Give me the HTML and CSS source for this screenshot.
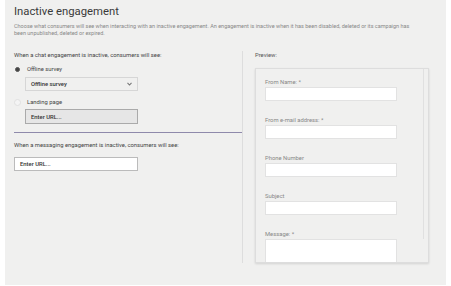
FILE: index.html
```html
<!DOCTYPE html>
<html lang="en">
<head>
    <meta charset="UTF-8">
    <title>Inactive engagement</title>
    <link rel="stylesheet" href="styles.css">
</head>
<body>
    <div class="panel">
        <h1>Inactive engagement</h1>
        <p class="desc">Choose what consumers will see when interacting with an inactive engagement. An engagement is inactive when it has been disabled, deleted or its campaign has been unpublished, deleted or expired.</p>

        <div class="columns">
            <!-- settings -->
            <div class="settings">
                <div class="block">
                    <div class="heading">When a chat engagement is inactive, consumers will see:</div>
                    <div class="radio-row"><span class="radio checked"></span>Offline survey</div>
                    <div class="select">
                        <span>Offline survey</span>
                        <svg width="5" height="4" viewBox="0 0 5 4"><path d="M0.5 0.8 L2.5 3 L4.5 0.8" fill="none" stroke="#777" stroke-width="1.1"/></svg>
                    </div>
                    <div class="radio-row"><span class="radio"></span>Landing page</div>
                    <div class="url disabled">Enter URL...</div>
                </div>
                <div class="block">
                    <div class="heading">When a messaging engagement is inactive, consumers will see:</div>
                    <div class="url wide">Enter URL...</div>
                </div>
            </div>

            <!-- preview -->
            <div class="preview">
                <div class="heading">Preview:</div>
                <div class="preview-box">
                    <div class="form">
                        <div class="field"><label>From Name: *</label><div class="input"></div></div>
                        <div class="field"><label>From e-mail address: *</label><div class="input"></div></div>
                        <div class="field"><label>Phone Number</label><div class="input"></div></div>
                        <div class="field"><label>Subject</label><div class="input"></div></div>
                        <div class="field"><label>Message: *</label><div class="input textarea"></div></div>
                    </div>
                    <div class="scrollbar"></div>
                </div>
            </div>
        </div>
    </div>
</body>
</html>
```

FILE: styles.css
```css
body {
    margin: 0;
    background-color: #fff;
    font-family: Roboto, "Liberation Sans", sans-serif;
    color: #333;
}
.panel {
    margin: 0 5px;
    height: 285px;
    background-color: #f0f0ef;
    padding: 5px 9px 0;
    box-sizing: border-box;
}
h1 {
    margin: 0;
    font-size: 11.3px;
    font-weight: 400;
    line-height: 14px;
    color: #3a3a3a;
}
.desc {
    margin: 4px 0 0;
    font-size: 5.5px;
    line-height: 7px;
    color: #888;
    width: 400px;
}
.columns {
    display: flex;
    margin-top: 14px;
}
.settings {
    width: 228px;
    height: 212px;
    border-right: 1px solid #ddd;
}
.heading {
    font-size: 5.85px;
    line-height: 8px;
    color: #444;
}
.block {
    padding-bottom: 8px;
}
.block + .block {
    border-top: 1px solid #8f8aab;
    padding-top: 8px;
}
.block .heading {
    margin-bottom: 5px;
}
.radio-row {
    display: flex;
    align-items: center;
    gap: 6px;
    font-size: 5.85px;
    line-height: 10px;
    color: #444;
}
.radio {
    width: 5px;
    height: 5px;
    border-radius: 50%;
    border: 1px solid #e0e0e0;
    background-color: #f4f4f4;
}
.radio.checked {
    border-color: #555;
    background-color: #444;
    width: 3px;
    height: 3px;
    margin: 0 1px;
}
.select {
    margin: 3px 0 6px 11px;
    width: 113px;
    height: 14px;
    box-sizing: border-box;
    border: 1px solid #d6d6d6;
    display: flex;
    align-items: center;
    justify-content: space-between;
    padding: 0 5px;
    font-size: 5.85px;
    font-weight: 500;
    color: #333;
}
.url {
    margin: 2px 0 0 11px;
    width: 113px;
    height: 15px;
    box-sizing: border-box;
    border: 1px solid #bbb;
    padding: 0 5px;
    display: flex;
    align-items: center;
    font-size: 5.85px;
    font-weight: 500;
    color: #333;
}
.url.disabled {
    background-color: #e6e6e6;
    border-color: #aaa;
}
.url.wide {
    margin: 8px 0 0;
    width: 124px;
    height: 14px;
    background-color: #fff;
}
.preview {
    flex: 1;
    padding-left: 12px;
}
.preview .heading {
    color: #555;
}
.preview-box {
    margin-top: 9px;
    width: 174px;
    height: 195px;
    box-sizing: border-box;
    border: 1px solid #ddd;
    box-shadow: 0 1px 2px rgba(0, 0, 0, 0.12);
    display: flex;
    overflow: hidden;
}
.form {
    flex: 1;
    padding: 10px 0 0 9px;
}
.field {
    height: 38px;
}
.field label {
    display: block;
    font-size: 5.85px;
    line-height: 7px;
    margin-bottom: 1px;
    color: #888;
}
.input {
    width: 132px;
    height: 14px;
    box-sizing: border-box;
    background-color: #fff;
    border: 1px solid #e2e2e2;
}
.input.textarea {
    height: 30px;
}
.scrollbar {
    width: 4px;
    height: 170px;
    border-left: 1px solid #e0e0e0;
}
```
